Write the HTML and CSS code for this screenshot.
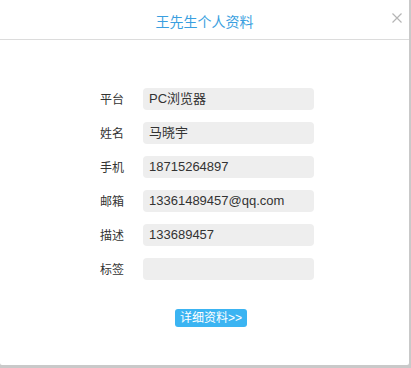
FILE: index.html
```html
<!DOCTYPE html>
<html lang="zh-CN">
<head>
    <meta charset="UTF-8">
    <title>王先生个人资料</title>
    <link rel="stylesheet" href="styles.css">
</head>
<body>
    <div class="dialog">
        <div class="dialog-header">
            <h2>王先生个人资料</h2>
            <span class="close">
                <svg width="10" height="10" viewBox="0 0 10 10">
                    <path d="M0.5 0.5 L9.5 9.5 M9.5 0.5 L0.5 9.5" stroke="#b5b5b5" stroke-width="1.2" fill="none"/>
                </svg>
            </span>
        </div>

        <div class="profile-form">
            <div class="row">
                <label>平台</label>
                <div class="field">PC浏览器</div>
            </div>
            <div class="row">
                <label>姓名</label>
                <div class="field">马晓宇</div>
            </div>
            <div class="row">
                <label>手机</label>
                <div class="field">18715264897</div>
            </div>
            <div class="row">
                <label>邮箱</label>
                <div class="field">13361489457@qq.com</div>
            </div>
            <div class="row">
                <label>描述</label>
                <div class="field">133689457</div>
            </div>
            <div class="row">
                <label>标签</label>
                <div class="field"></div>
            </div>

            <div class="actions">
                <a href="#" class="button">详细资料&gt;&gt;</a>
            </div>
        </div>
    </div>
</body>
</html>
```

FILE: styles.css
```css
* {
    margin: 0;
    padding: 0;
    box-sizing: border-box;
}

body {
    font-family: "Liberation Sans", "Noto Sans CJK SC", sans-serif;
    background: #c9c9c9;
    color: #333;
}

.dialog {
    width: 409px;
    height: 365px;
    background: white;
    border-radius: 0 0 2px 2px;
}

.dialog-header {
    position: relative;
    height: 40px;
    border-bottom: 1px solid #dcdcdc;
    text-align: center;
}

.dialog-header h2 {
    font-size: 14px;
    font-weight: normal;
    color: #3a9fe0;
    line-height: 44px;
}

.close {
    position: absolute;
    right: 7px;
    top: 13px;
    width: 10px;
    height: 10px;
    line-height: 0;
}

.profile-form {
    padding: 48px 0 0 100px;
}

.row {
    display: flex;
    align-items: center;
    height: 22px;
    margin-bottom: 12px;
}

.row label {
    width: 43px;
    font-size: 12px;
    color: #333;
    margin-top: -2px;
}

.field {
    width: 171px;
    height: 22px;
    line-height: 22px;
    background: #eeeeee;
    border-radius: 4px;
    padding: 0 6px;
    font-size: 13px;
    color: #333;
}

.actions {
    padding: 16px 0 0 75px;
}

.button {
    display: inline-block;
    width: 72px;
    height: 18px;
    line-height: 18px;
    text-align: center;
    background: #3bb4f2;
    color: white;
    font-size: 12px;
    border-radius: 3px;
    text-decoration: none;
}
```
